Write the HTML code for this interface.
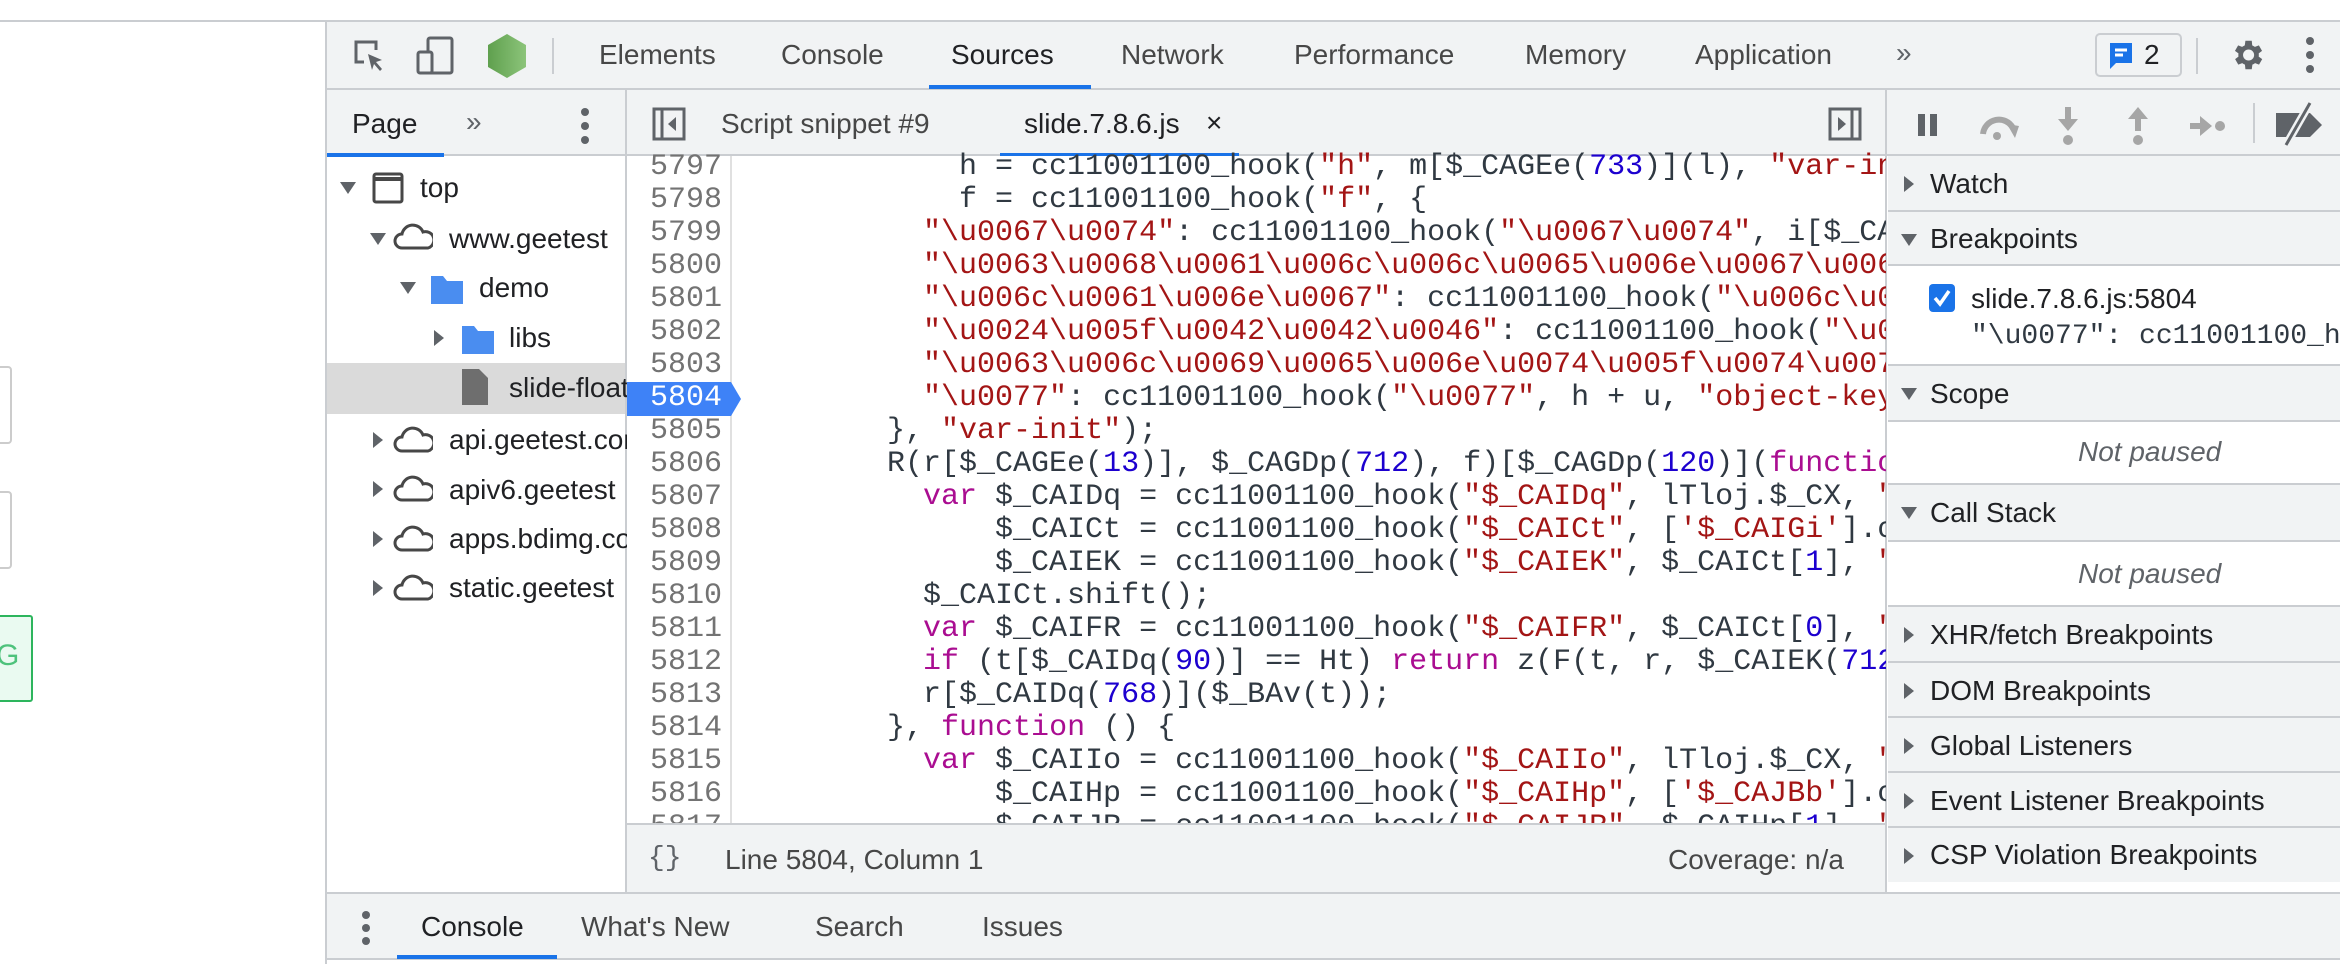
<!DOCTYPE html>
<html><head><meta charset="utf-8"><style>
*{margin:0;padding:0;box-sizing:border-box}
body{width:2340px;height:964px;position:relative;overflow:hidden;background:#fff;font-family:"Liberation Sans",Arial,sans-serif;color:#303942}
.a{position:absolute}
.t{position:absolute;font-size:28px;color:#474747;white-space:nowrap;line-height:32px}
.bg{background:#f1f3f4}
.hl{position:absolute;height:2px;background:#cacdd1}
.vl{position:absolute;width:2px;background:#cacdd1}
.ub{position:absolute;height:4px;background:#1a73e8}
.code{position:absolute;left:743px;top:151px;width:1143px;height:674px;overflow:hidden;font-family:"Liberation Mono","DejaVu Sans Mono",monospace;font-size:30px;line-height:33px;white-space:pre;color:#303942}
.ln{position:absolute;left:627px;top:151px;width:95px;font-family:"Liberation Mono",monospace;font-size:30px;line-height:33px;text-align:right;color:#737373}
.s{color:#a31515}.k{color:#aa0d91}.n{color:#1c00cf}
.sec{position:absolute;left:1888px;width:452px;background:#f1f3f4;border-bottom:2px solid #cacdd1}
.sec .t{left:42px;color:#202124}
.tri{position:absolute;width:0;height:0}
.tr{border-top:8px solid transparent;border-bottom:8px solid transparent;border-left:10px solid #5f6368}
.td{border-left:8px solid transparent;border-right:8px solid transparent;border-top:12px solid #5f6368}
</style></head><body>
<!-- page area -->
<div class="hl" style="left:0;top:20px;width:2340px;"></div>
<div class="a" style="left:-4px;top:366px;width:16px;height:78px;border:2px solid #ccc;border-radius:4px"></div>
<div class="a" style="left:-4px;top:491px;width:16px;height:78px;border:2px solid #ccc;border-radius:4px"></div>
<div class="a" style="left:-4px;top:615px;width:37px;height:87px;border:2px solid #2db55d;border-radius:3px;background:#eafaf1"></div>
<div class="t" style="left:-4px;top:640px;color:#4ec27c;font-size:30px">G</div>

<!-- devtools -->
<div class="a" style="left:325px;top:22px;width:2015px;height:942px;background:#fff"></div>
<div class="vl" style="left:325px;top:22px;height:942px"></div>
<!-- top toolbar -->
<div class="a bg" style="left:327px;top:22px;width:2013px;height:67px"></div>
<div class="hl" style="left:327px;top:88px;width:2013px"></div>
<svg class="a" style="left:352px;top:38px" width="36" height="36" viewBox="0 0 36 36"><path d="M14 4H4v20h8" fill="none" stroke="#5f6368" stroke-width="3"/><path d="M4 4h20v8" fill="none" stroke="#5f6368" stroke-width="3"/><path d="M16 16l14 6-6 2 6 7-2 2-6-7-2 6z" fill="#5f6368"/></svg>
<svg class="a" style="left:416px;top:36px" width="40" height="40" viewBox="0 0 40 40"><rect x="12" y="2" width="24" height="35" rx="2" fill="none" stroke="#5f6368" stroke-width="3"/><rect x="2" y="16" width="14" height="21" rx="2" fill="#f1f3f4" stroke="#5f6368" stroke-width="3"/></svg>
<svg class="a" style="left:486px;top:33px" width="42" height="46" viewBox="0 0 42 46"><defs><linearGradient id="g" x1="0" x2="1"><stop offset="0" stop-color="#5fa04e"/><stop offset="1" stop-color="#8cc47a"/></linearGradient></defs><path d="M21 1l19 11v22L21 45 2 34V12z" fill="url(#g)"/></svg>
<div class="vl" style="left:552px;top:38px;height:36px"></div>
<div class="t" style="left:599px;top:39px">Elements</div>
<div class="t" style="left:781px;top:39px">Console</div>
<div class="t" style="left:951px;top:39px;color:#202124">Sources</div>
<div class="ub" style="left:929px;top:85px;width:162px"></div>
<div class="t" style="left:1121px;top:39px">Network</div>
<div class="t" style="left:1294px;top:39px">Performance</div>
<div class="t" style="left:1525px;top:39px">Memory</div>
<div class="t" style="left:1695px;top:39px">Application</div>
<div class="t" style="left:1896px;top:37px;color:#5f6368">»</div>
<div class="a" style="left:2095px;top:33px;width:87px;height:44px;border:2px solid #cacdd1;border-radius:5px"></div>
<svg class="a" style="left:2108px;top:41px" width="26" height="30" viewBox="0 0 26 30"><path d="M2 2h22v20H8l-6 6z" fill="#1a73e8"/><path d="M7 9h12M7 14h8" stroke="#fff" stroke-width="3"/></svg>
<div class="t" style="left:2144px;top:39px;color:#202124">2</div>
<div class="vl" style="left:2196px;top:38px;height:36px"></div>
<svg class="a" style="left:2228px;top:36px" width="38" height="38" viewBox="0 0 24 24"><path fill="#5f6368" d="M19.4 13a7.5 7.5 0 000-2l2.1-1.6-2-3.5-2.5 1a7 7 0 00-1.7-1L15 3h-4l-.4 2.9a7 7 0 00-1.7 1l-2.5-1-2 3.5L6.6 11a7.5 7.5 0 000 2l-2.1 1.6 2 3.5 2.5-1a7 7 0 001.7 1L11 21h4l.4-2.9a7 7 0 001.7-1l2.5 1 2-3.5zM13 15.5a3.5 3.5 0 110-7 3.5 3.5 0 010 7z"/></svg>
<svg class="a" style="left:2305px;top:36px" width="10" height="38" viewBox="0 0 10 38"><circle cx="5" cy="5" r="4" fill="#5f6368"/><circle cx="5" cy="19" r="4" fill="#5f6368"/><circle cx="5" cy="33" r="4" fill="#5f6368"/></svg>

<!-- second row -->
<div class="a bg" style="left:327px;top:90px;width:2013px;height:66px"></div>
<div class="hl" style="left:327px;top:154px;width:2013px"></div>
<div class="t" style="left:352px;top:108px;color:#202124">Page</div>
<div class="ub" style="left:327px;top:153px;width:117px"></div>
<div class="t" style="left:466px;top:106px;color:#5f6368">»</div>
<svg class="a" style="left:580px;top:107px" width="10" height="38" viewBox="0 0 10 38"><circle cx="5" cy="5" r="4" fill="#5f6368"/><circle cx="5" cy="19" r="4" fill="#5f6368"/><circle cx="5" cy="33" r="4" fill="#5f6368"/></svg>
<div class="vl" style="left:625px;top:90px;height:802px"></div>
<svg class="a" style="left:652px;top:107px" width="34" height="34" viewBox="0 0 34 34"><rect x="2" y="2" width="30" height="30" fill="none" stroke="#5f6368" stroke-width="3"/><path d="M10 2v30" stroke="#5f6368" stroke-width="3"/><path d="M24 10l-8 7 8 7z" fill="#5f6368"/></svg>
<div class="t" style="left:721px;top:108px">Script snippet #9</div>
<div class="t" style="left:1024px;top:108px;color:#202124">slide.7.8.6.js</div>
<div class="t" style="left:1206px;top:107px;color:#202124">×</div>
<div class="ub" style="left:1000px;top:153px;width:239px"></div>
<svg class="a" style="left:1828px;top:107px" width="34" height="34" viewBox="0 0 34 34"><rect x="2" y="2" width="30" height="30" fill="none" stroke="#5f6368" stroke-width="3"/><path d="M24 2v30" stroke="#5f6368" stroke-width="3"/><path d="M10 10l8 7-8 7z" fill="#5f6368"/></svg>
<div class="vl" style="left:1885px;top:90px;height:802px"></div>
<!-- debugger buttons -->
<svg class="a" style="left:1916px;top:113px" width="24" height="24"><rect x="2" y="1" width="7" height="22" fill="#5f6368"/><rect x="14" y="1" width="7" height="22" fill="#5f6368"/></svg>
<svg class="a" style="left:1977px;top:110px" width="46" height="34" viewBox="0 0 46 34"><path d="M6 24a16 16 0 0130-6" fill="none" stroke="#a6a6a6" stroke-width="6"/><path d="M30 14l12 2-4 12z" fill="#a6a6a6"/><circle cx="20" cy="26" r="4" fill="#a6a6a6"/></svg>
<svg class="a" style="left:2056px;top:107px" width="24" height="40"><path d="M9 0h6v12h7L12 24 2 12h7z" fill="#a6a6a6"/><circle cx="12" cy="33" r="5" fill="#a6a6a6"/></svg>
<svg class="a" style="left:2126px;top:107px" width="24" height="40"><path d="M9 24h6V12h7L12 0 2 12h7z" fill="#a6a6a6"/><circle cx="12" cy="33" r="5" fill="#a6a6a6"/></svg>
<svg class="a" style="left:2190px;top:114px" width="36" height="24"><path d="M0 9h10V2l12 10-12 10v-7H0z" fill="#a6a6a6"/><circle cx="30" cy="12" r="5" fill="#a6a6a6"/></svg>
<div class="vl" style="left:2253px;top:103px;height:40px"></div>
<svg class="a" style="left:2274px;top:101px" width="50" height="46" viewBox="0 0 50 46"><path d="M2 12h34l12 12-12 12H2z" fill="#5f6368"/><path d="M36 2L12 44" stroke="#f1f3f4" stroke-width="8"/><path d="M36 2L12 44" stroke="#5f6368" stroke-width="3"/></svg>

<!-- tree -->
<div class="a" style="left:327px;top:363px;width:298px;height:51px;background:#dadada"></div>
<div class="tri td" style="left:340px;top:182px"></div>
<svg class="a" style="left:372px;top:172px" width="32" height="32"><rect x="2" y="2" width="28" height="28" rx="2" fill="none" stroke="#474747" stroke-width="3"/><path d="M2 7h28" stroke="#474747" stroke-width="4"/></svg>
<div class="t" style="left:420px;top:172px;color:#202124">top</div>
<svg width="0" height="0" style="position:absolute"><defs><path id="cl" d="M9 28a7 7 0 010-14 11 11 0 0121-2 8 8 0 015 16z" fill="none" stroke="#474747" stroke-width="3"/></defs></svg>
<div class="tri td" style="left:370px;top:233px"></div>
<svg class="a" style="left:393px;top:220px" width="40" height="32"><use href="#cl"/></svg>
<div class="t" style="left:449px;top:223px;color:#202124">www.geetest</div>
<div class="tri td" style="left:400px;top:282px"></div>
<svg class="a" style="left:430px;top:273px" width="34" height="32"><path d="M1 3h12l4 5h16v23H1z" fill="#4a8df0"/></svg>
<div class="t" style="left:479px;top:272px;color:#202124">demo</div>
<div class="tri tr" style="left:434px;top:330px"></div>
<svg class="a" style="left:461px;top:323px" width="34" height="32"><path d="M1 3h12l4 5h16v23H1z" fill="#4a8df0"/></svg>
<div class="t" style="left:509px;top:322px;color:#202124">libs</div>
<svg class="a" style="left:461px;top:368px" width="28" height="38"><path d="M1 1h17l9 9v27H1z" fill="#6e6e6e"/></svg>
<div class="t" style="left:509px;top:372px;color:#202124">slide-float</div>
<div class="a" style="left:625px;top:160px;width:0"></div>
<div class="tri tr" style="left:373px;top:432px"></div>
<svg class="a" style="left:393px;top:423px" width="40" height="32"><use href="#cl"/></svg>
<div class="t" style="left:449px;top:424px;color:#202124">api.geetest.com</div>
<div class="tri tr" style="left:373px;top:481px"></div>
<svg class="a" style="left:393px;top:472px" width="40" height="32"><use href="#cl"/></svg>
<div class="t" style="left:449px;top:474px;color:#202124">apiv6.geetest</div>
<div class="tri tr" style="left:373px;top:531px"></div>
<svg class="a" style="left:393px;top:522px" width="40" height="32"><use href="#cl"/></svg>
<div class="t" style="left:449px;top:523px;color:#202124">apps.bdimg.com</div>
<div class="tri tr" style="left:373px;top:580px"></div>
<svg class="a" style="left:393px;top:571px" width="40" height="32"><use href="#cl"/></svg>
<div class="t" style="left:449px;top:572px;color:#202124">static.geetest</div>
<div class="a" style="left:627px;top:156px;width:1258px;height:736px;background:#fff"></div>

<!-- gutter -->
<div class="vl" style="left:730px;top:156px;height:669px;background:#e0e0e0"></div>
<svg class="a" style="left:627px;top:382px" width="116" height="34"><path d="M0 0h104l10 17-10 17H0z" fill="#3e82f7"/></svg>
<div class="ln" style="overflow:hidden;height:674px"><div style="position:relative;top:0">5797<br>5798<br>5799<br>5800<br>5801<br>5802<br>5803<br><span style="color:#fff">5804</span><br>5805<br>5806<br>5807<br>5808<br>5809<br>5810<br>5811<br>5812<br>5813<br>5814<br>5815<br>5816<br>5817</div></div>
<div class="code">            h = cc11001100_hook(<span class="s">"h"</span>, m[$_CAGEe(<span class="n">733</span>)](l), <span class="s">"var-init"</span>),
            f = cc11001100_hook(<span class="s">"f"</span>, {
          <span class="s">"\u0067\u0074"</span>: cc11001100_hook(<span class="s">"\u0067\u0074"</span>, i[$_CAGEe(<span class="n">1</span>)],
          <span class="s">"\u0063\u0068\u0061\u006c\u006c\u0065\u006e\u0067\u0065"</span>: cc1100
          <span class="s">"\u006c\u0061\u006e\u0067"</span>: cc11001100_hook(<span class="s">"\u006c\u0061\u006e"</span>
          <span class="s">"\u0024\u005f\u0042\u0042\u0046"</span>: cc11001100_hook(<span class="s">"\u0024\u005f"</span>
          <span class="s">"\u0063\u006c\u0069\u0065\u006e\u0074\u005f\u0074\u0079\u0070\u0065"</span>
          <span class="s">"\u0077"</span>: cc11001100_hook(<span class="s">"\u0077"</span>, h + u, <span class="s">"object-key"</span>)
        }, <span class="s">"var-init"</span>);
        R(r[$_CAGEe(<span class="n">13</span>)], $_CAGDp(<span class="n">712</span>), f)[$_CAGDp(<span class="n">120</span>)](<span class="k">function</span> () {
          <span class="k">var</span> $_CAIDq = cc11001100_hook(<span class="s">"$_CAIDq"</span>, lTloj.$_CX, <span class="s">"var"</span>),
              $_CAICt = cc11001100_hook(<span class="s">"$_CAICt"</span>, [<span class="s">'$_CAIGi'</span>].concat(
              $_CAIEK = cc11001100_hook(<span class="s">"$_CAIEK"</span>, $_CAICt[<span class="n">1</span>], <span class="s">"var"</span>
          $_CAICt.shift();
          <span class="k">var</span> $_CAIFR = cc11001100_hook(<span class="s">"$_CAIFR"</span>, $_CAICt[<span class="n">0</span>], <span class="s">"var"</span>
          <span class="k">if</span> (t[$_CAIDq(<span class="n">90</span>)] == Ht) <span class="k">return</span> z(F(t, r, $_CAIEK(<span class="n">712</span>
          r[$_CAIDq(<span class="n">768</span>)]($_BAv(t));
        }, <span class="k">function</span> () {
          <span class="k">var</span> $_CAIIo = cc11001100_hook(<span class="s">"$_CAIIo"</span>, lTloj.$_CX, <span class="s">"var"</span>
              $_CAIHp = cc11001100_hook(<span class="s">"$_CAIHp"</span>, [<span class="s">'$_CAJBb'</span>].concat
              $_CAIJR = cc11001100_hook(<span class="s">"$_CAIJR"</span>, $_CAIHp[<span class="n">1</span>], <span class="s">"var"</span></div>

<!-- status bar -->
<div class="a bg" style="left:627px;top:823px;width:1258px;height:69px;border-top:2px solid #cacdd1"></div>
<div class="t" style="left:648px;top:843px;color:#5f6368;font-family:'Liberation Mono',monospace;font-size:28px">{}</div>
<div class="t" style="left:725px;top:844px">Line 5804, Column 1</div>
<div class="t" style="left:1668px;top:844px">Coverage: n/a</div>

<!-- right sidebar sections -->
<div class="sec" style="top:156px;height:56px"><div class="tri tr" style="left:16px;top:20px"></div><div class="t" style="top:12px">Watch</div></div>
<div class="sec" style="top:212px;height:54px"><div class="tri td" style="left:13px;top:22px"></div><div class="t" style="top:11px">Breakpoints</div></div>
<div class="a" style="left:1888px;top:266px;width:452px;height:100px;background:#fff;border-bottom:2px solid #cacdd1"></div>
<svg class="a" style="left:1928px;top:283px" width="28" height="30"><rect x="1" y="1" width="26" height="28" rx="4" fill="#1a73e8"/><path d="M7 15l5 6 9-13" fill="none" stroke="#fff" stroke-width="3.5"/></svg>
<div class="t" style="left:1971px;top:283px;color:#202124">slide.7.8.6.js:5804</div>
<div class="a" style="left:1971px;top:321px;font-family:'Liberation Mono',monospace;font-size:28px;line-height:32px;white-space:pre;color:#303942">"\u0077": cc11001100_hook</div>
<div class="sec" style="top:366px;height:56px"><div class="tri td" style="left:13px;top:22px"></div><div class="t" style="top:12px">Scope</div></div>
<div class="a" style="left:1888px;top:422px;width:452px;height:63px;background:#fff;border-bottom:2px solid #cacdd1"><div class="t" style="left:190px;top:14px;font-style:italic;color:#5f6368">Not paused</div></div>
<div class="sec" style="top:485px;height:57px"><div class="tri td" style="left:13px;top:22px"></div><div class="t" style="top:12px">Call Stack</div></div>
<div class="a" style="left:1888px;top:542px;width:452px;height:65px;background:#fff;border-bottom:2px solid #cacdd1"><div class="t" style="left:190px;top:16px;font-style:italic;color:#5f6368">Not paused</div></div>
<div class="sec" style="top:607px;height:56px"><div class="tri tr" style="left:16px;top:20px"></div><div class="t" style="top:12px">XHR/fetch Breakpoints</div></div>
<div class="sec" style="top:663px;height:55px"><div class="tri tr" style="left:16px;top:20px"></div><div class="t" style="top:12px">DOM Breakpoints</div></div>
<div class="sec" style="top:718px;height:55px"><div class="tri tr" style="left:16px;top:20px"></div><div class="t" style="top:12px">Global Listeners</div></div>
<div class="sec" style="top:773px;height:55px"><div class="tri tr" style="left:16px;top:20px"></div><div class="t" style="top:12px">Event Listener Breakpoints</div></div>
<div class="sec" style="top:828px;height:54px;border-bottom:none"><div class="tri tr" style="left:16px;top:20px"></div><div class="t" style="top:11px">CSP Violation Breakpoints</div></div>

<!-- drawer -->
<div class="a bg" style="left:327px;top:892px;width:2013px;height:68px;border-top:2px solid #cacdd1;border-bottom:2px solid #cacdd1"></div>
<svg class="a" style="left:361px;top:911px" width="10" height="34" viewBox="0 0 10 34"><circle cx="5" cy="4" r="4" fill="#5f6368"/><circle cx="5" cy="17" r="4" fill="#5f6368"/><circle cx="5" cy="30" r="4" fill="#5f6368"/></svg>
<div class="t" style="left:421px;top:911px;color:#202124">Console</div>
<div class="ub" style="left:397px;top:955px;width:160px"></div>
<div class="t" style="left:581px;top:911px">What's New</div>
<div class="t" style="left:815px;top:911px">Search</div>
<div class="t" style="left:982px;top:911px">Issues</div>
</body></html>
